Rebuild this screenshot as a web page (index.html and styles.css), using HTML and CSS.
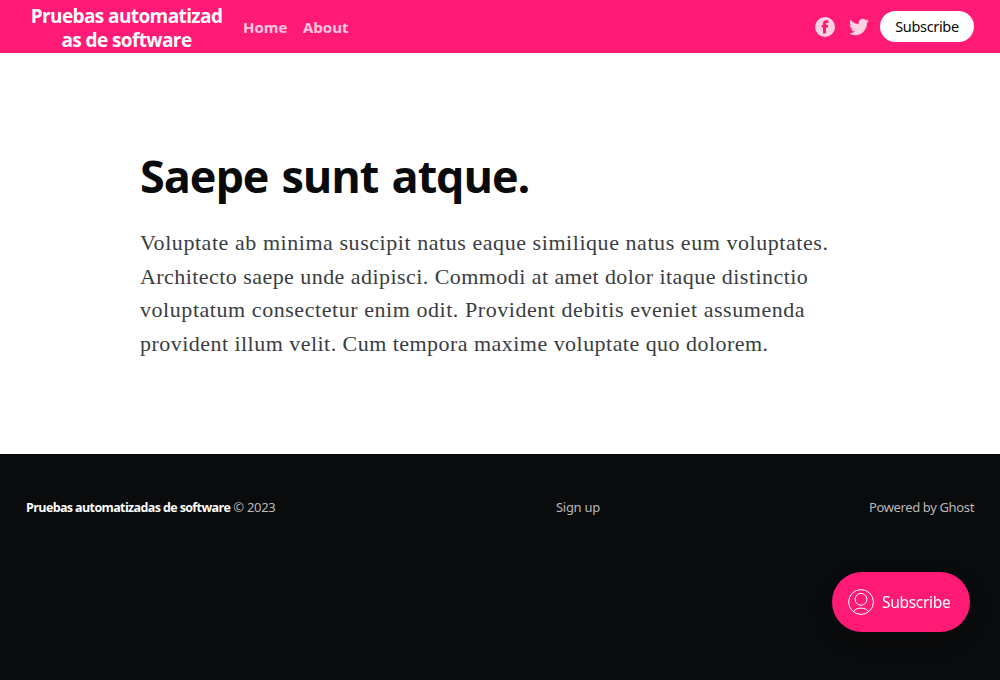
FILE: index.html
```html
<!DOCTYPE html>
<html lang="es">
<head>
<meta charset="utf-8">
<title>Pruebas automatizadas de software</title>
<link rel="stylesheet" href="styles.css">
</head>
<body>
<header class="head">
  <a class="logo"><span>Pruebas automatizad</span><br><span class="logo-end">as de software</span></a>
  <nav class="nav"><a class="nav-home">Home</a><a class="nav-about">About</a></nav>
  <div class="actions">
    <svg class="facebook" viewBox="0 0 20 20"><path fill-rule="evenodd" d="M10 0a10 10 0 1 0 0 20a10 10 0 0 0 0-20zM8 16.6V10.4H6.7V7.9H8V6.3C8 4.2 9.2 3.3 11 3.3h2.3v2.6h-1.4c-.7 0-.9.3-.9.9v1.1h2.3l-.3 2.5h-2v6.2z"/></svg>
    <svg class="twitter" viewBox="0 0 24 24"><path d="M23.954 4.569a10 10 0 0 1-2.825.775 4.958 4.958 0 0 0 2.163-2.723 9.99 9.99 0 0 1-3.127 1.184 4.92 4.92 0 0 0-8.384 4.482C7.691 8.094 4.066 6.13 1.64 3.161a4.822 4.822 0 0 0-.666 2.475c0 1.71.87 3.213 2.188 4.096a4.904 4.904 0 0 1-2.228-.616v.061a4.923 4.923 0 0 0 3.946 4.827 4.996 4.996 0 0 1-2.212.085 4.937 4.937 0 0 0 4.604 3.417 9.868 9.868 0 0 1-6.102 2.105c-.39 0-.779-.023-1.17-.067a13.995 13.995 0 0 0 7.557 2.209c9.054 0 13.999-7.496 13.999-13.986 0-.209 0-.42-.015-.63a9.936 9.936 0 0 0 2.46-2.548z"/></svg>
    <a class="subscribe"><span>Subscribe</span></a>
  </div>
</header>
<main class="article">
  <h1 class="title">Saepe sunt atque.</h1>
  <p class="excerpt">
    <span class="line line-1">Voluptate ab minima suscipit natus eaque similique natus eum voluptates.</span>
    <span class="line line-2">Architecto saepe unde adipisci. Commodi at amet dolor itaque distinctio</span>
    <span class="line line-3">voluptatum consectetur enim odit. Provident debitis eveniet assumenda</span>
    <span class="line line-4">provident illum velit. Cum tempora maxime voluptate quo dolorem.</span>
  </p>
</main>
<footer class="foot">
  <div class="copyright"><b class="site">Pruebas automatizadas de software</b> <span>© 2023</span></div>
  <a class="signup">Sign up</a>
  <a class="powered">Powered by Ghost</a>
</footer>
<a class="portal">
  <svg class="user" viewBox="0 0 26 26"><circle cx="13" cy="13" r="12.4"/><circle cx="13" cy="10.3" r="5.9"/><path d="M5.2 22.6c2-2.3 4.700-3.500 7.800-3.500s5.800 1.200 7.800 3.500"/></svg>
  <span>Subscribe</span>
</a>
</body>
</html>
```
FILE: styles.css
```css
* { box-sizing: border-box; }
body {
  margin: 0;
  height: 680px;
  display: flex;
  flex-direction: column;
  overflow: hidden;
  background: #fff;
  color: #090a0b;
  font-family: "Noto Sans", "Open Sans", sans-serif;
}
.head {
  height: 53px;
  flex: none;
  display: flex;
  align-items: center;
  padding: 0 26px;
  background: #ff1a75;
  color: #fff;
}
.logo {
  width: 201px;
  text-align: center;
  white-space: nowrap;
  font-family: "Open Sans", sans-serif;
  font-size: 19px;
  line-height: 24px;
  font-weight: 700;
  letter-spacing: -0.6px;
  padding-top: 2px;
}
.nav {
  display: flex;
  gap: 16px;
  margin-left: 16px;
  font-family: "Open Sans", sans-serif;
  font-size: 15px;
  font-weight: 700;
  opacity: .75;
}
.nav-home { width: 44px; }
.actions { display: flex; align-items: center; margin-left: auto; }
.facebook, .twitter { width: 20px; height: 20px; fill: #fff; opacity: .8; }
.twitter { margin-left: 14px; margin-right: 11px; }
.subscribe {
  width: 94px;
  height: 31px;
  border-radius: 16px;
  background: #fff;
  color: #090a0b;
  font-size: 14.5px;
  line-height: 31px;
  text-align: center;
  letter-spacing: -0.33px;
}
.article { height: 401px; flex: none; padding: 91px 140px 0; }
.title {
  margin: 0;
  font-family: "Open Sans", sans-serif;
  font-size: 45px;
  line-height: 64px;
  font-weight: 700;
  letter-spacing: -1.05px;
  word-spacing: 2.5px;
  white-space: nowrap;
}
.excerpt {
  margin: 18px 0 0;
  font-family: "Liberation Serif", serif;
  font-size: 22px;
  line-height: 33.6px;
  color: #3a3d40;
}
.line { display: block; white-space: nowrap; letter-spacing: .555px; }
.line-2 { letter-spacing: .445px; }
.line-4 { letter-spacing: .465px; }
.foot {
  flex: 1;
  display: flex;
  align-items: flex-start;
  padding: 43px 26px 0;
  background: #0a0b0c;
  color: #b9b9ba;
  font-size: 13px;
  line-height: 20px;
  letter-spacing: -0.3px;
  white-space: nowrap;
}
.copyright { width: 530px; }
.site { color: #fff; font-family: "Open Sans", sans-serif; font-size: 12.5px; letter-spacing: -0.62px; }
.powered { margin-left: auto; letter-spacing: -0.36px; }
.portal {
  position: fixed;
  right: 30px;
  bottom: 48px;
  width: 138px;
  height: 60px;
  border-radius: 30px;
  display: flex;
  align-items: center;
  gap: 8px;
  padding-left: 16px;
  background: #ff1a75;
  color: #fff;
  font-size: 15.5px;
  letter-spacing: -0.3px;
  box-shadow: 0 8px 20px rgba(0, 0, 0, .2);
}
.user { width: 26px; height: 26px; fill: none; stroke: #fff; stroke-width: 1; }
```
